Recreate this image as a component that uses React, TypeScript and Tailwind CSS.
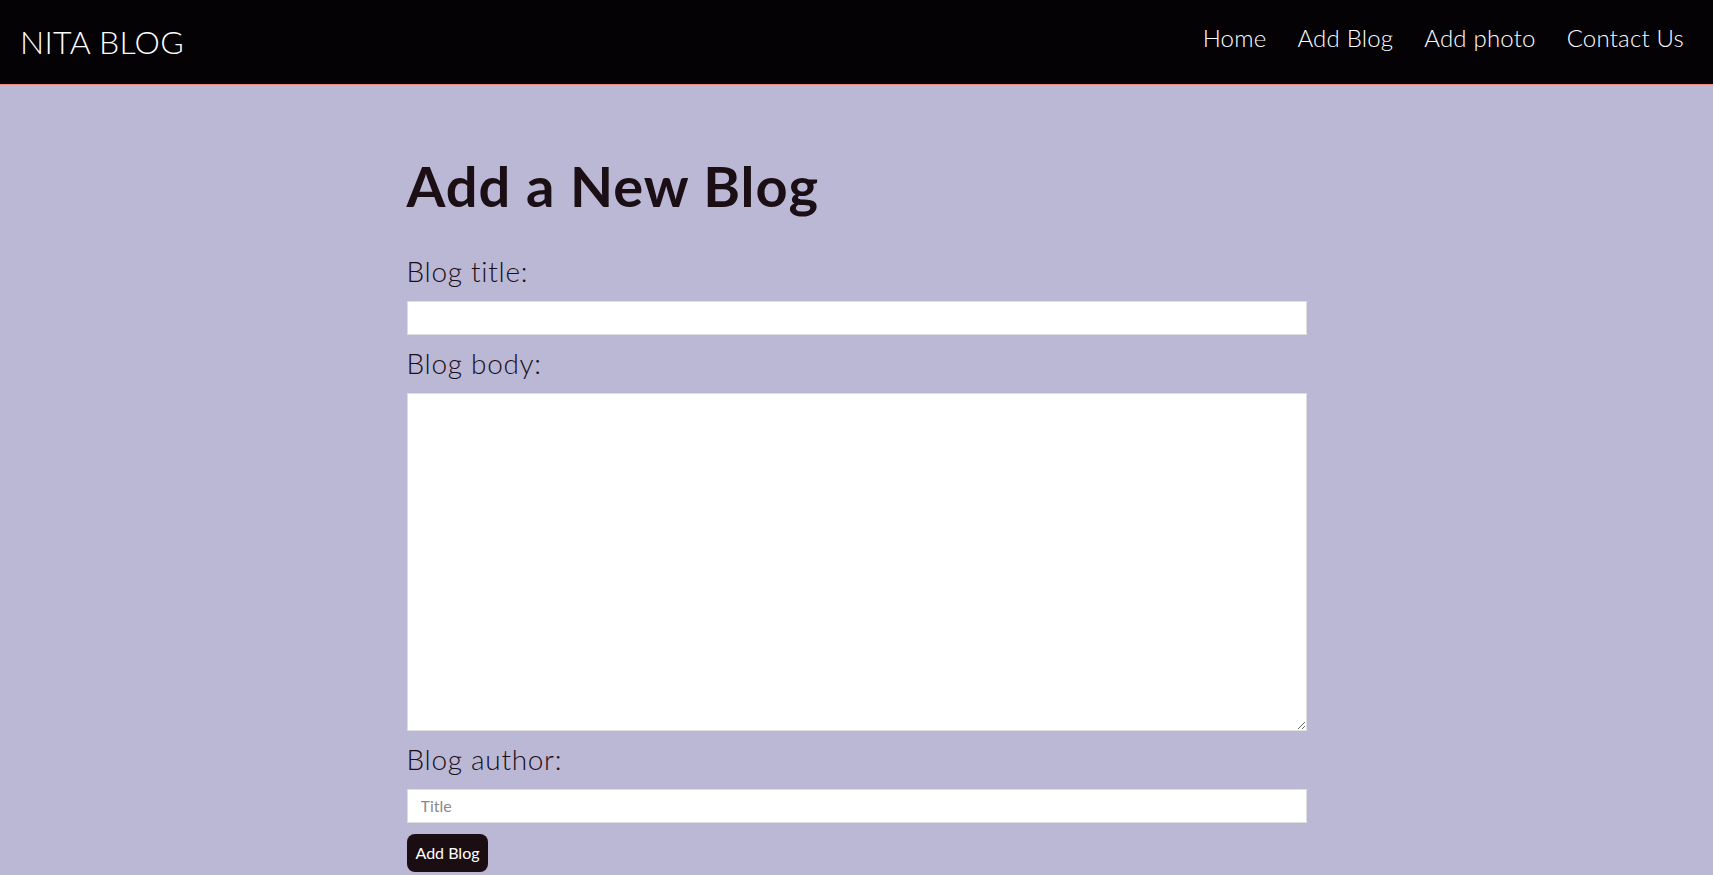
const font = { fontFamily: '"Lato", "Noto Sans", sans-serif' };

function Navbar() {
  const links = ['Home', 'Add Blog', 'Add photo', 'Contact Us'];
  return (
    <nav className="flex h-[85px] items-center justify-between border-b border-[#ee8b7a] bg-[#050205] pl-5 pr-[29px] text-white">
      <h1 className="text-[32px] font-light tracking-[0.3px]">NITA BLOG</h1>
      <div className="-mt-2 flex items-center gap-[31px]">
        {links.map((l) => (
          <a key={l} href="#" className="text-[24px] font-light tracking-[0.2px] text-white">
            {l}
          </a>
        ))}
      </div>
    </nav>
  );
}

export default function App() {
  return (
    <div style={font} className="min-h-screen bg-[#bbb8d6] text-[#1b0e15]">
      <Navbar />
      <main className="mx-auto w-[900px] pt-[67px]">
        <h2 className="text-[56px] font-bold leading-[1.2] tracking-[1px]">Add a New Blog</h2>
        <form className="mt-[36px] flex flex-col" onSubmit={(e) => e.preventDefault()}>
          <label className="block text-[28px] font-light leading-[1.2] tracking-[0.7px]">Blog title:</label>
          <input
            type="text"
            className="mt-[12px] block h-[34px] w-full border border-[#dddddd] bg-white px-3 outline-none"
          />
          <label className="mt-[12px] block text-[28px] font-light leading-[1.2] tracking-[0.7px]">Blog body:</label>
          <textarea className="mt-[13px] block h-[338px] w-full border border-[#dddddd] bg-white px-3 py-2 outline-none" />
          <label className="mt-[12px] block text-[28px] font-light leading-[1.2] tracking-[0.7px]">Blog author:</label>
          <input
            type="text"
            placeholder="Title"
            className="mt-[12px] block h-[34px] w-full border border-[#dddddd] bg-white px-[13px] text-[16px] outline-none placeholder:text-[#8a8a8a]"
          />
          <div>
            <button
              type="submit"
              className="mt-[11px] h-[38px] rounded-lg bg-[#1b0e13] px-[9px] text-[16px] font-normal text-white"
            >
              Add Blog
            </button>
          </div>
        </form>
      </main>
    </div>
  );
}
